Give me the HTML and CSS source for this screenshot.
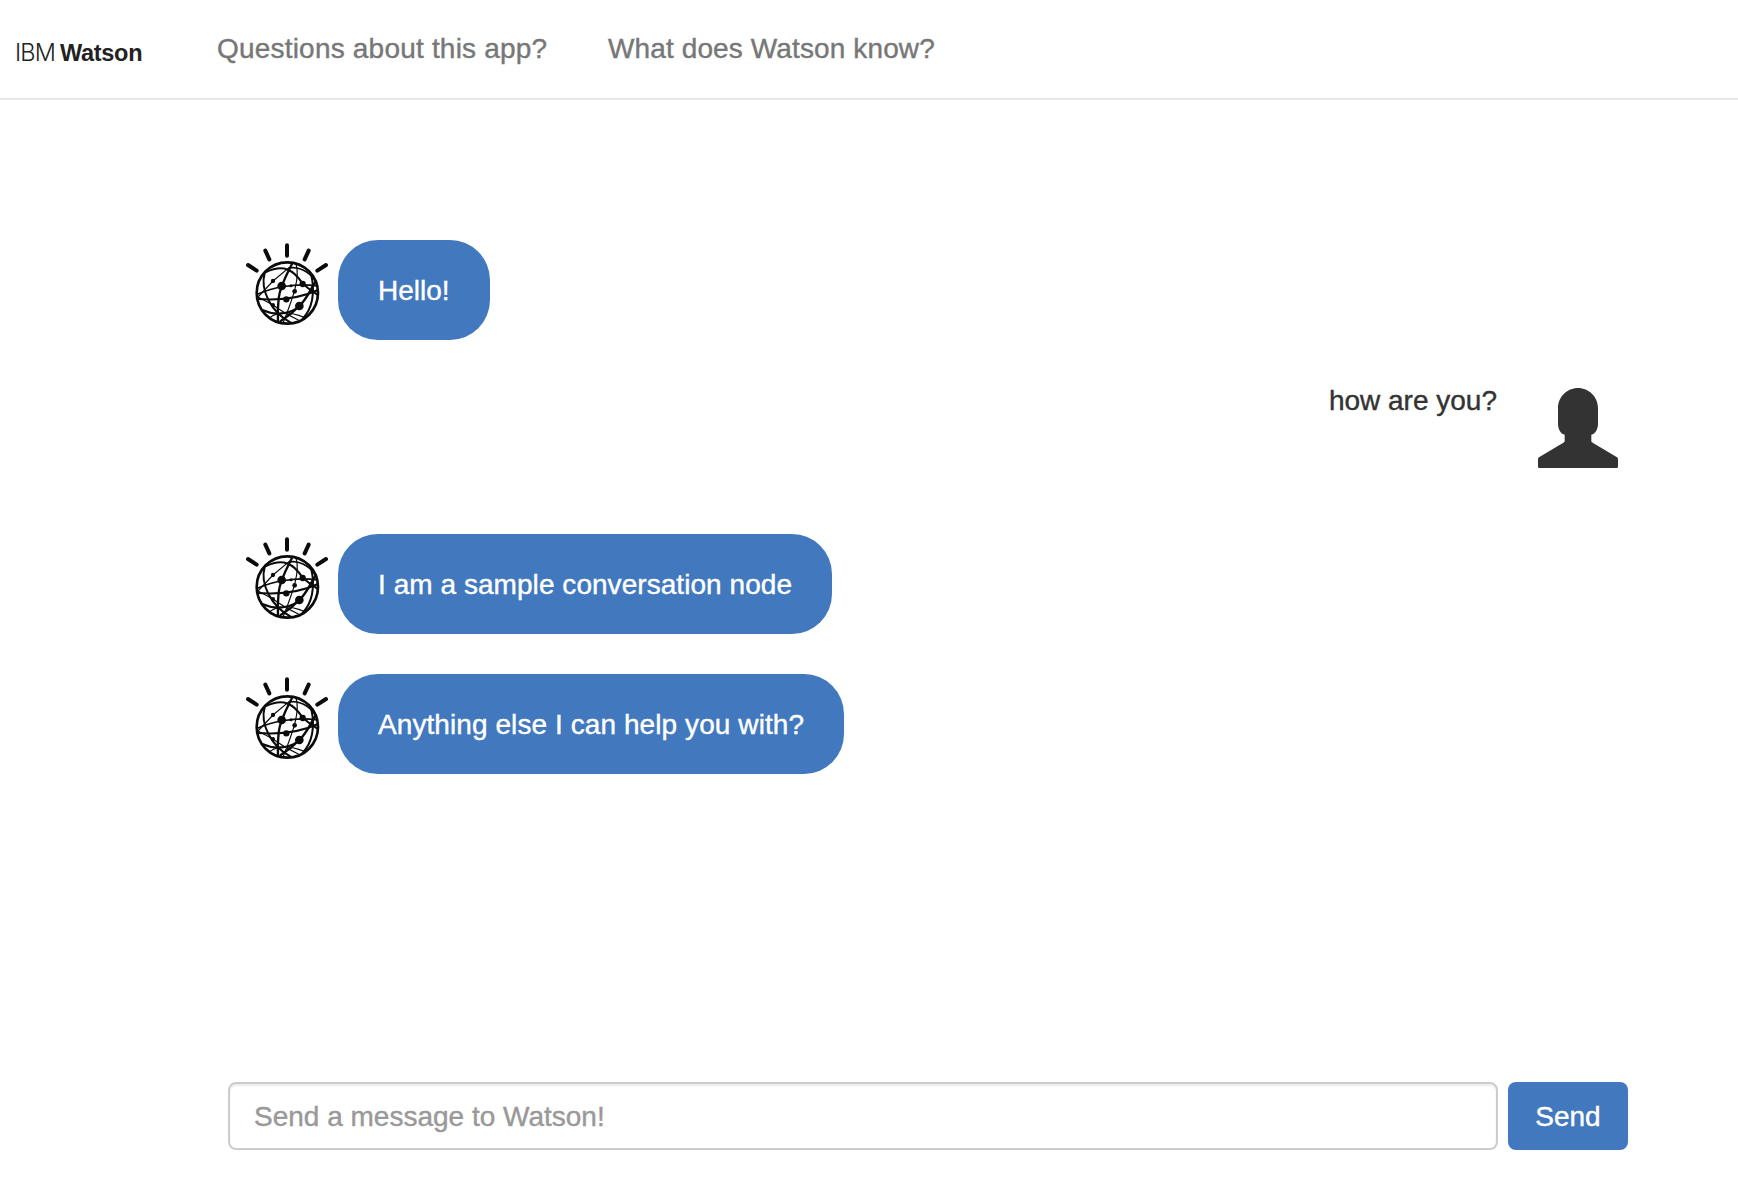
FILE: index.html
```html
<!DOCTYPE html>
<html lang="en">
<head>
<meta charset="utf-8">
<title>IBM Watson</title>
<link rel="stylesheet" href="styles.css">
</head>
<body>
<svg class="sprite" aria-hidden="true">
  <symbol id="watson" viewBox="24 30 300 270">
    <rect x="24" y="30" width="300" height="270" fill="#fefefe"/>
    <g fill="none" stroke="#0b0b0b" stroke-linecap="round">
      <path stroke-width="12" d="M54 105l26 17M106 62l12 26M171 46v31M236 62l-12 26M288 105l-26 17"/>
      <circle cx="172" cy="189" r="92" stroke-width="8"/>
      <path stroke-width="7" d="M187 100C170 134 150 168 146 205Q142 240 144 276"/>
      <path stroke-width="5" d="M84 192C125 174 195 158 260 168"/>
      <path stroke-width="6" d="M82 207C150 212 215 203 264 180"/>
      <path stroke-width="6" d="M108 126C160 102 190 118 218 161Q240 180 262 194"/>
      <path stroke-width="5" d="M178 114C205 108 236 125 252 148"/>
      <path stroke-width="6" d="M104 130C90 178 122 246 182 278"/>
      <path stroke-width="7" d="M256 156C240 180 232 205 208 228Q182 255 152 273"/>
      <path stroke-width="6" d="M97 240C145 262 190 246 208 228"/>
      <path stroke-width="6" d="M244 136C256 190 246 238 218 266"/>
      <path stroke-width="3.5" d="M198 102C211 142 190 200 160 277M84 201L129 153L178 112M84 201L129 225Q158 247 205 270M118 264Q155 234 222 262"/>
    </g>
    <g fill="#0b0b0b">
      <circle cx="155" cy="168" r="13"/><circle cx="218" cy="162" r="9.5"/>
      <circle cx="208" cy="228" r="13"/><circle cx="169" cy="208" r="9.5"/>
      <circle cx="194" cy="184" r="7"/><circle cx="129" cy="153" r="6.5"/>
      <circle cx="129" cy="225" r="6"/><circle cx="183" cy="167" r="4.5"/>
    </g>
  </symbol>
</svg>
<header class="navbar">
  <div class="brand"><span class="brand-light">IBM</span><span class="brand-bold">Watson</span></div>
  <nav class="links">
    <a class="link link-questions">Questions about this app?</a>
    <a class="link link-know">What does Watson know?</a>
  </nav>
</header>
<main class="chat">
  <div class="row">
    <svg class="avatar"><use href="#watson"/></svg>
    <div class="bubble">Hello!</div>
  </div>
  <div class="row row-user">
    <div class="said">how are you?</div>
    <svg class="person" viewBox="0 0 240 240"><path fill="#333" d="M120 0C153 0 180 27 180 60V108C180 122 172 139 160 140V159Q160 162 164 164L237 208Q240 210 240 214V236Q240 240 236 240H4Q0 240 0 236V214Q0 210 3 208L76 164Q80 162 80 159V140C68 139 60 122 60 108V60C60 27 87 0 120 0Z"/></svg>
  </div>
  <div class="row">
    <svg class="avatar"><use href="#watson"/></svg>
    <div class="bubble bubble-sample">I am a sample conversation node</div>
  </div>
  <div class="row">
    <svg class="avatar"><use href="#watson"/></svg>
    <div class="bubble bubble-help">Anything else I can help you with?</div>
  </div>
</main>
<form class="composer">
  <input class="message" type="text" placeholder="Send a message to Watson!">
  <button class="send" type="button">Send</button>
</form>
</body>
</html>
```
FILE: styles.css
```css
* { box-sizing: border-box; }
body {
  margin: 0;
  height: 1198px;
  display: flex;
  flex-direction: column;
  background: #fff;
  color: #333;
  font: 28px/40px "Liberation Sans", Arial, sans-serif;
  -webkit-text-stroke: 0.4px currentColor;
  overflow: hidden;
}
.sprite { display: none; }
.navbar {
  display: flex;
  height: 100px;
  flex: none;
  border-bottom: 2px solid #e7e7e7;
}
.brand {
  width: 217px;
  padding: 33px 0 0 15px;
  font-size: 23.5px;
  color: #222;
  white-space: nowrap;
  -webkit-text-stroke: 0;
}
.brand-light {
  display: inline-block;
  width: 45px;
  font-family: Inter, sans-serif;
  font-weight: 300;
  letter-spacing: -0.8px;
}
.brand-bold { font-weight: 700; letter-spacing: -0.3px; }
.links { display: flex; padding-top: 29px; gap: 60px; color: #777; }
.link { white-space: nowrap; }
.link-questions { width: 331px; letter-spacing: 0.2px; }
.link-know { letter-spacing: 0.12px; }
.chat {
  flex: 1;
  padding: 140px 120px 0 238px;
}
.row { display: flex; margin-bottom: 40px; }
.avatar { width: 100px; height: 90px; flex: none; }
.bubble {
  height: 100px;
  padding: 31px 40px 29px;
  border-radius: 40px;
  background: #4178be;
  color: #fff;
  white-space: nowrap;
}
.bubble-sample { letter-spacing: 0.05px; }
.bubble-help { letter-spacing: 0.08px; }
.row-user { height: 114px; justify-content: flex-end; gap: 41px; }
.said { padding-top: 1px; }
.person { width: 80px; height: 80px; margin-top: 8px; }
.composer {
  display: flex;
  gap: 10px;
  padding: 0 110px 48px 228px;
}
.message {
  flex: 1;
  min-width: 0;
  height: 68px;
  padding: 13px 24px 11px;
  border: 2px solid #ccc;
  border-radius: 8px;
  box-shadow: inset 0 2px 2px rgba(0, 0, 0, 0.075);
  background: #fff;
  font: inherit;
  outline: none;
}
.message::placeholder { color: #999; opacity: 1; }
.send {
  width: 120px;
  height: 68px;
  padding: 2px 0 0;
  border: 0;
  border-radius: 8px;
  background: #4178be;
  color: #fff;
  font: inherit;
}
```
